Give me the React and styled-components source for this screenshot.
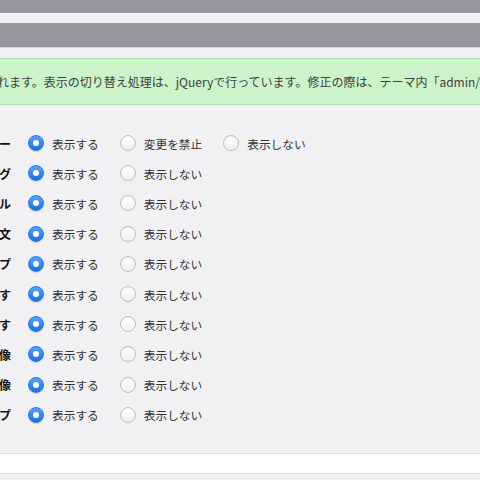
import React from 'react';
import styled, { createGlobalStyle } from 'styled-components';

const GlobalStyle = createGlobalStyle`
  html, body {
    margin: 0;
    padding: 0;
    background: #f1f1f3;
  }
  body {
    font-family: "Noto Sans CJK JP", "Noto Sans", sans-serif;
    color: #333;
  }
`;

const Viewport = styled.div`
  width: 480px;
  height: 480px;
  overflow: hidden;
  background: #f1f1f3;
`;

// the screen is scrolled sideways, so the page starts left of the window
const Page = styled.div`
  margin-left: -120px;
  width: 760px;
`;

const GrayBar = styled.div`
  height: ${p => p.$h}px;
  background: #97969f;
  border-bottom: 1px solid ${p => (p.$line ? '#d9d4de' : '#97969f')};
  box-sizing: border-box;
`;

const Gap = styled.div`
  height: ${p => p.$h}px;
  background: #f1f1f5;
`;

const Notice = styled.div`
  height: 47px;
  box-sizing: border-box;
  display: flex;
  align-items: center;
  padding-left: 21px;
  background: #cdf3cb;
  border-top: 1px solid #b3e0b0;
  border-bottom: 1px solid #b3e0b0;
  font-size: 12px;
  color: #3d3d3d;
  white-space: nowrap;
`;

const Panel = styled.div`
  padding: 23px 0 23px;
  background: #f1f1f3;
  border-bottom: 1px solid #dcdcde;
`;

const Row = styled.div`
  display: flex;
  align-items: center;
  height: 30.2px;
`;

const Label = styled.div`
  width: 131px;
  text-align: right;
  font-size: 12px;
  font-weight: 700;
  color: #111;
  white-space: nowrap;
  overflow: hidden;
  margin-right: 17px;
`;

const Option = styled.label`
  display: flex;
  align-items: center;
  margin-right: 21px;
  font-size: 11.7px;
  color: #333;
  white-space: nowrap;
`;

const Radio = styled.span`
  width: 16px;
  height: 16px;
  box-sizing: border-box;
  border-radius: 50%;
  margin-right: 8px;
  flex: none;
  display: flex;
  align-items: center;
  justify-content: center;
  background: ${p => (p.$checked ? 'linear-gradient(#59a3f7, #1d6ee0)' : 'linear-gradient(#ffffff, #f0f0f0)')};
  border: 1px solid ${p => (p.$checked ? '#2a78e4' : '#bdbdbd')};
  box-shadow: ${p => (p.$checked ? '0 1px 1px rgba(0,0,0,0.12)' : 'inset 0 1px 1px rgba(0,0,0,0.05)')};

  &::after {
    content: '';
    display: ${p => (p.$checked ? 'block' : 'none')};
    width: 6px;
    height: 6px;
    border-radius: 50%;
    background: #fff;
  }
`;

const WhiteStrip = styled.div`
  height: 19px;
  background: #fff;
  border-bottom: 1px solid #dcdcde;
`;

const rows = [
  { label: 'カテゴリー', options: ['表示する', '変更を禁止', '表示しない'] },
  { label: 'タグ', options: ['表示する', '表示しない'] },
  { label: 'タイトル', options: ['表示する', '表示しない'] },
  { label: '本文', options: ['表示する', '表示しない'] },
  { label: 'グループ', options: ['表示する', '表示しない'] },
  { label: 'コメントを許可す', options: ['表示する', '表示しない'] },
  { label: 'ピンバックを許可す', options: ['表示する', '表示しない'] },
  { label: 'アイキャッチ画像', options: ['表示する', '表示しない'] },
  { label: 'サムネイル画像', options: ['表示する', '表示しない'] },
  { label: '投稿タイプ', options: ['表示する', '表示しない'] }
];

const App = () => (
  <Viewport>
    <GlobalStyle />
    <Page>
      <GrayBar $h={13} />
      <Gap $h={10} />
      <GrayBar $h={25} $line />
      <Gap $h={10} />
      <Notice>
        表示を切り替えられます。表示の切り替え処理は、jQueryで行っています。修正の際は、テーマ内「admin/edit.js」を編集してください。
      </Notice>
      <Panel>
        {rows.map(row => (
          <Row key={row.label}>
            <Label>{row.label}</Label>
            {row.options.map((opt, i) => (
              <Option key={opt}>
                <Radio $checked={i === 0} />
                {opt}
              </Option>
            ))}
          </Row>
        ))}
      </Panel>
      <WhiteStrip />
    </Page>
  </Viewport>
);

export default App;
